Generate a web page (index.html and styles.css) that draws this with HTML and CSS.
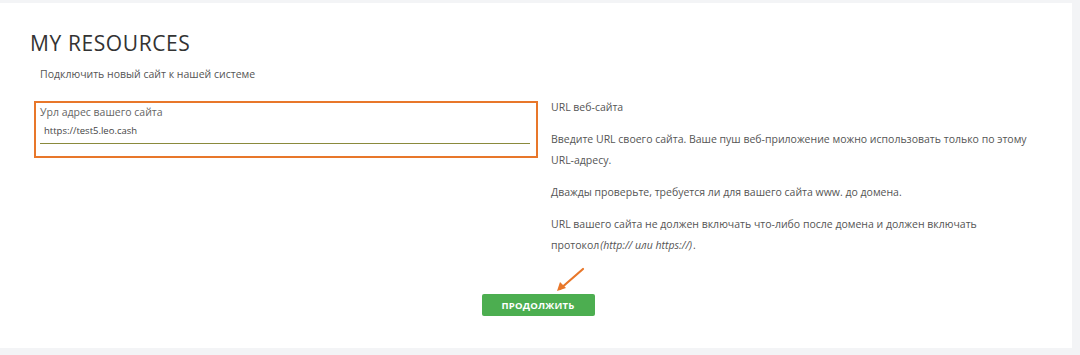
FILE: index.html
```html
<!DOCTYPE html>
<html lang="ru">
<head>
<meta charset="utf-8">
<link rel="stylesheet" href="styles.css">
</head>
<body>
<div class="card">
  <h1 class="title">MY RESOURCES</h1>
  <p class="subtitle">Подключить новый сайт к нашей системе</p>
  <div class="row">
    <div class="left">
      <div class="field">
        <label class="field-label">Урл адрес вашего сайта</label>
        <div class="field-value">https://test5.leo.cash</div>
        <div class="field-line"></div>
      </div>
    </div>
    <div class="right">
      <p>URL веб-сайта</p>
      <p>Введите URL своего сайта. Ваше пуш веб-приложение можно использовать только по этому URL-адресу.</p>
      <p>Дважды проверьте, требуется ли для вашего сайта www. до домена.</p>
      <p>URL вашего сайта не должен включать что-либо после домена и должен включать <span class="nobr">протокол<em class="proto">(http:// или https://)</em>.</span></p>
    </div>
  </div>
  <div class="actions">
    <button class="btn">ПРОДОЛЖИТЬ</button>
    <svg class="arrow" width="34" height="28" viewBox="0 0 34 28">
      <line x1="30" y1="2" x2="7" y2="22" stroke="#e8772a" stroke-width="2.2" stroke-linecap="round"/>
      <path d="M4 24 L7 15 L13 21 Z" fill="#e8772a"/>
    </svg>
  </div>
</div>
</body>
</html>
```
FILE: styles.css
```css
html, body {
  margin: 0;
  padding: 0;
  background: #f3f4f6;
}
body {
  font-family: "Open Sans", "Noto Sans", sans-serif;
  color: #555;
}
.card {
  margin-top: 3px;
  width: 1072px;
  height: 345px;
  box-sizing: border-box;
  background: #fff;
  padding: 27px 0 0 0;
}
.title {
  margin: 0 0 0 30px;
  font-size: 21px;
  line-height: 26px;
  font-weight: 500;
  letter-spacing: 0.6px;
  color: #333;
}
.subtitle {
  margin: 10px 0 0 40px;
  font-size: 10.5px;
  line-height: 16px;
  color: #555;
}
.row {
  display: flex;
  margin-top: 19px;
}
.left {
  margin-left: 34px;
  width: 504px;
}
.field {
  box-sizing: border-box;
  height: 57px;
  border: 2px solid #e8772a;
  padding: 2px 6px 0 4px;
}
.field-label {
  display: block;
  font-size: 10.5px;
  line-height: 14px;
  color: #666;
}
.field-value {
  margin: 5px 0 0 4px;
  font-size: 9.5px;
  line-height: 14px;
  color: #444;
}
.field-line {
  margin-top: 5px;
  height: 1px;
  background: #8a8a3c;
}
.right {
  margin-left: 13px;
  width: 490px;
}
.right p {
  margin: 0 0 11px 0;
  font-size: 10.5px;
  line-height: 21px;
  color: #555;
}
.right p:first-child {
  margin-top: -4px;
}
.nobr {
  white-space: nowrap;
}
.proto {
  display: inline-block;
  font-style: italic;
  margin: 0 1px;
}
.actions {
  position: relative;
  display: flex;
  justify-content: center;
  margin-top: 27px;
  padding-left: 4px;
  width: 1072px;
  box-sizing: border-box;
}
.btn {
  width: 113px;
  height: 22px;
  border: none;
  border-radius: 2px;
  background: #4cae50;
  color: #fff;
  font-family: "Open Sans", sans-serif;
  font-weight: 700;
  font-size: 9.5px;
  letter-spacing: 0.2px;
  padding: 0;
}
.arrow {
  position: absolute;
  left: 553px;
  top: -27px;
}
```
